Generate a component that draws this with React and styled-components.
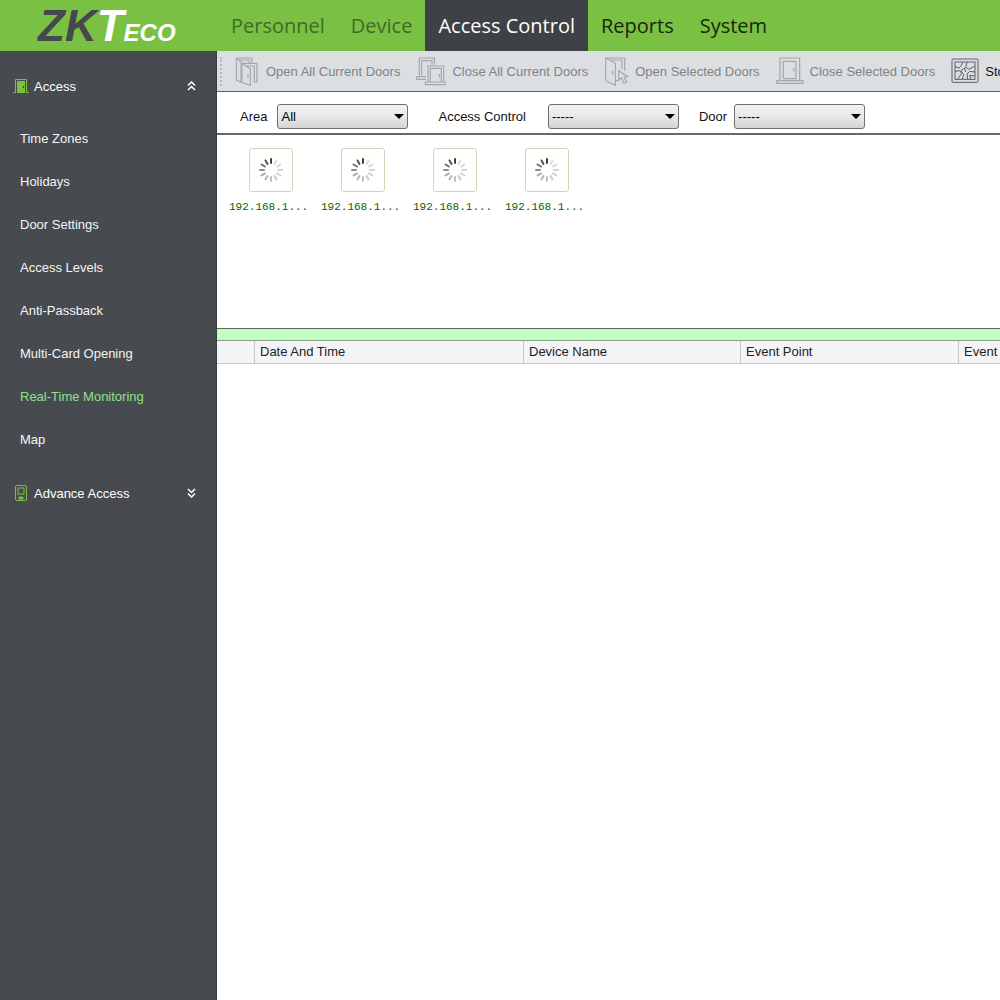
import React, { useState } from 'react';
import styled, { createGlobalStyle } from 'styled-components';

const GlobalStyle = createGlobalStyle`
  * {
    box-sizing: border-box;
  }

  body {
    margin: 0;
    background: #fff;
    font-family: 'Liberation Sans', Arial, sans-serif;
    font-size: 13px;
    color: #111;
  }
`;

const Page = styled.div`
  min-height: 100vh;
  display: flex;
  flex-direction: column;
  overflow: hidden;
`;

const Header = styled.header`
  display: flex;
  height: 51px;
  background: #7ac143;
`;

const Logo = styled.a`
  width: 218px;
  flex-shrink: 0;
  padding-left: 38px;
  line-height: 51px;
  font-size: 44px;
  font-weight: 700;
  font-style: italic;
  text-decoration: none;
  white-space: nowrap;
  color: #45484c;
`;

const LogoAccent = styled.span`
  color: #fff;
  font-size: ${props => (props.$small ? 24 : 44)}px;
`;

const TopNav = styled.nav`
  display: flex;
`;

const NavLink = styled.a`
  padding: 0 13px;
  line-height: 51px;
  font-family: 'Open Sans', 'Noto Sans', sans-serif;
  font-size: 20px;
  text-decoration: none;
  white-space: nowrap;
  color: ${props => (props.$active ? '#fff' : props.$muted ? '#3f6b26' : '#16280c')};
  background: ${props => (props.$active ? '#3e4145' : 'transparent')};
`;

const Body = styled.div`
  flex: 1;
  display: flex;
`;

const Sidebar = styled.aside`
  width: 217px;
  flex-shrink: 0;
  padding-top: 19px;
  background: #474b50;
  border-right: 1px solid #3a3d41;
`;

const GroupButton = styled.button`
  display: flex;
  align-items: center;
  gap: 5px;
  width: 100%;
  height: 32px;
  padding: 0 20px 0 13px;
  border: none;
  background: none;
  color: #fff;
  font: inherit;
  text-align: left;
  cursor: pointer;
`;

const GroupName = styled.span`
  flex: 1;
`;

const GroupList = styled.ul`
  list-style: none;
  margin: 0;
  padding: 15px 0 16px;
`;

const SideLink = styled.a`
  display: block;
  padding-left: 20px;
  line-height: 43px;
  text-decoration: none;
  color: ${props => (props.$active ? '#8fe08f' : '#f4f4f4')};
`;

const Main = styled.main`
  flex: 1;
  min-width: 0;
  overflow: hidden;
`;

const Toolbar = styled.div`
  display: flex;
  align-items: center;
  gap: 13px;
  height: 41px;
  padding-left: 3px;
  background: #dcdfe2;
  border-bottom: 1px solid #5c5e62;
`;

const Grip = styled.span`
  height: 29px;
  border-left: 2px dotted #b4b7bb;
`;

const Tools = styled.div`
  display: flex;
  gap: 16px;
`;

const ToolButton = styled.button`
  display: flex;
  align-items: center;
  flex-shrink: 0;
  gap: 6px;
  padding: 0;
  border: none;
  background: none;
  font: inherit;
  white-space: nowrap;
  color: #111;

  &:disabled {
    color: #7f8286;
  }
`;

const Filters = styled.form`
  display: flex;
  align-items: center;
  height: 43px;
  padding: 8px 0 0 23px;
  border-bottom: 2px solid #66686b;
`;

const Field = styled.div`
  display: flex;
  align-items: center;
  gap: ${props => props.$gap}px;
  margin-right: ${props => props.$after || 0}px;
`;

const SelectBox = styled.div`
  position: relative;

  &::after {
    content: '';
    position: absolute;
    right: 4px;
    top: 10px;
    border: 5px solid transparent;
    border-top-color: #000;
    border-bottom: none;
    pointer-events: none;
  }
`;

const Select = styled.select`
  appearance: none;
  width: 131px;
  height: 25px;
  padding: 0 16px 0 3px;
  border: 1px solid #707070;
  border-radius: 3px;
  background: linear-gradient(#f3f3f3, #e8e8e8 50%, #d4d4d4);
  font: inherit;
  color: #000;
`;

const Devices = styled.ul`
  display: flex;
  flex-wrap: wrap;
  align-content: flex-start;
  gap: 8px;
  list-style: none;
  margin: 0;
  min-height: 193px;
  padding: 13px 12px;
`;

const Device = styled.li`
  display: flex;
  flex-direction: column;
  align-items: center;
  gap: 7px;
  width: 84px;
`;

const DeviceTile = styled.div`
  display: flex;
  align-items: center;
  justify-content: center;
  width: 44px;
  height: 44px;
  border: 1px solid #d6d3bd;
  border-radius: 3px;
`;

const DeviceName = styled.span`
  align-self: flex-start;
  font-family: 'Liberation Mono', monospace;
  font-size: 11px;
  line-height: 16px;
  white-space: nowrap;
  color: #006400;
`;

const Splitter = styled.div`
  height: 13px;
  background: #c1ffc1;
  border-top: 1px solid #5f6a5f;
  border-bottom: 1px solid #8a9a8a;
`;

const EventTable = styled.table`
  width: 100%;
  min-width: 1000px;
  table-layout: fixed;
  border-collapse: separate;
  border-spacing: 0;
`;

const HeadCell = styled.th`
  width: ${props => (props.$width ? `${props.$width}px` : 'auto')};
  height: 23px;
  padding: 0 5px 2px;
  font-weight: 400;
  text-align: left;
  color: #222;
  background: #f4f4f6;
  border-right: 1px solid #c4c6ca;
  border-bottom: 1px solid #c9cbcf;
`;

const ToolSvg = ({ width, children, color = '#a3a6aa', stroke = 3.5 }) => (
  <svg width={width} height="30" viewBox={`0 -2 ${width * 3} 90`} fill="none" stroke={color} strokeWidth={stroke} aria-hidden="true">
    {children}
  </svg>
);

const OpenAllIcon = () => (
  <ToolSvg width={25}>
    <path d="M4 4H50V18M4 4V70L18 77V16L4 4M12 10H42V18" />
    <path d="M21 20H66V76H56M30 28H58V76M21 20V78L46 86V36L21 20" />
    <path d="M39 54V64" />
  </ToolSvg>
);

const CloseAllIcon = () => (
  <ToolSvg width={30}>
    <path d="M10 58V4H55V24M17 56V12H48V24M2 60H30M2 60V68H30" />
    <path d="M36 76V28H83V76M43 76V35H76V76M28 76H90V84H28Z" />
    <path d="M70 52V62" />
  </ToolSvg>
);

const OpenSelectedIcon = () => (
  <ToolSvg width={25}>
    <path d="M5 4H62V42M5 4V72L34 86V20L5 4M18 10H54V38M34 72H44" />
    <path d="M26 42V54" />
    <path d="M44 42V70L52 64L60 80L68 76L60 62L71 60Z" />
  </ToolSvg>
);

const CloseSelectedIcon = () => (
  <ToolSvg width={28}>
    <path d="M12 72V4H71V72M22 66V14H60V66H22M2 72H81V80H2Z" />
    <path d="M53 34V44" />
  </ToolSvg>
);

const AlarmIcon = () => (
  <ToolSvg width={28} color="#5d6064" stroke={3}>
    <rect x="3" y="7" width="78" height="70" rx="3" />
    <rect x="12" y="16" width="60" height="52" />
    <path d="M12 30L24 34L30 28L36 16M12 44L26 42L32 50L20 68M34 68L38 54L30 42L40 34" />
    <path d="M48 16L44 32L54 38L72 28M72 46L56 44L48 52L50 68M60 68L56 56L72 58M40 34L44 46" />
  </ToolSvg>
);

const DoorIcon = () => (
  <svg width="16" height="16" viewBox="0 0 16 16" aria-hidden="true">
    <path d="M0 14.5H3M13 14.5H16M2.5 14V1.5H13.5V14" fill="none" stroke="#7ac143" />
    <path d="M4 3H12V15H4Z" fill="#7ac143" />
    <path d="M10.5 8V10" stroke="#33402b" />
  </svg>
);

const ReaderIcon = () => (
  <svg width="16" height="16" viewBox="0 0 16 16" fill="none" stroke="#7ac143" aria-hidden="true">
    <rect x="2.5" y="0.5" width="11" height="15" rx="1.5" />
    <rect x="5" y="3" width="6" height="6" />
    <path d="M6 12H10V14H6Z" fill="#7ac143" />
  </svg>
);

const Chevrons = ({ up }) => (
  <svg width="9" height="10" viewBox="0 0 9 10" fill="none" stroke="#fff" strokeWidth="1.5" aria-hidden="true">
    <path d={up ? 'M1 4.5L4.5 1L8 4.5M1 9L4.5 5.5L8 9' : 'M1 1L4.5 4.5L8 1M1 5.5L4.5 9L8 5.5'} />
  </svg>
);

const spokes = ['#3c3c3c', '#dcdcdc', '#d8d8d8', '#d4d4d4', '#cfcfcf', '#c8c8c8', '#c0c0c0', '#b4b4b4', '#a4a4a4', '#8c8c8c', '#707070', '#525252'];

const Spinner = () => (
  <svg width="26" height="26" viewBox="0 0 26 26" strokeWidth="2" strokeLinecap="round" aria-hidden="true">
    {spokes.map((color, i) => (
      <path key={i} d="M13 2V6" stroke={color} transform={`rotate(${i * 30} 13 13)`} />
    ))}
  </svg>
);

const topLinks = [
  { name: 'Personnel', muted: true },
  { name: 'Device', muted: true },
  { name: 'Access Control', active: true },
  { name: 'Reports' },
  { name: 'System' },
];

const accessLinks = [
  'Time Zones',
  'Holidays',
  'Door Settings',
  'Access Levels',
  'Anti-Passback',
  'Multi-Card Opening',
  'Real-Time Monitoring',
  'Map',
];

const devices = ['192.168.1...', '192.168.1...', '192.168.1...', '192.168.1...'];

const FilterSelect = ({ id, label, option, gap, after }) => (
  <Field $gap={gap} $after={after}>
    <label htmlFor={id}>{label}</label>
    <SelectBox>
      <Select id={id}>
        <option>{option}</option>
      </Select>
    </SelectBox>
  </Field>
);

const App = () => {
  const [open, setOpen] = useState(true);

  return (
    <Page>
      <GlobalStyle />
      <Header>
        <Logo href="#">
          ZK<LogoAccent>T</LogoAccent><LogoAccent $small>ECO</LogoAccent>
        </Logo>
        <TopNav>
          {topLinks.map(link => (
            <NavLink key={link.name} href="#" $active={link.active} $muted={link.muted}>
              {link.name}
            </NavLink>
          ))}
        </TopNav>
      </Header>

      <Body>
        <Sidebar>
          <GroupButton type="button" aria-expanded={open} onClick={() => setOpen(!open)}>
            <DoorIcon />
            <GroupName>Access</GroupName>
            <Chevrons up={open} />
          </GroupButton>
          {open && (
            <GroupList>
              {accessLinks.map(name => (
                <li key={name}>
                  <SideLink href="#" $active={name === 'Real-Time Monitoring'}>{name}</SideLink>
                </li>
              ))}
            </GroupList>
          )}
          <GroupButton type="button" aria-expanded="false">
            <ReaderIcon />
            <GroupName>Advance Access</GroupName>
            <Chevrons />
          </GroupButton>
        </Sidebar>

        <Main>
          <Toolbar>
            <Grip />
            <Tools>
              <ToolButton type="button" disabled><OpenAllIcon />Open All Current Doors</ToolButton>
              <ToolButton type="button" disabled><CloseAllIcon />Close All Current Doors</ToolButton>
              <ToolButton type="button" disabled><OpenSelectedIcon />Open Selected Doors</ToolButton>
              <ToolButton type="button" disabled><CloseSelectedIcon />Close Selected Doors</ToolButton>
              <ToolButton type="button"><AlarmIcon />Stop Alarm</ToolButton>
            </Tools>
          </Toolbar>

          <Filters>
            <FilterSelect id="area" label="Area" option="All" gap={10} after={30} />
            <FilterSelect id="access" label="Access Control" option="-----" gap={22} after={20} />
            <FilterSelect id="door" label="Door" option="-----" gap={7} />
          </Filters>

          <Devices>
            {devices.map((ip, i) => (
              <Device key={i}>
                <DeviceTile><Spinner /></DeviceTile>
                <DeviceName>{ip}</DeviceName>
              </Device>
            ))}
          </Devices>

          <Splitter />

          <EventTable>
            <thead>
              <tr>
                <HeadCell $width={38} aria-label="Status" />
                <HeadCell $width={269}>Date And Time</HeadCell>
                <HeadCell $width={217}>Device Name</HeadCell>
                <HeadCell $width={218}>Event Point</HeadCell>
                <HeadCell>Event Description</HeadCell>
              </tr>
            </thead>
            <tbody />
          </EventTable>
        </Main>
      </Body>
    </Page>
  );
};

export default App;
